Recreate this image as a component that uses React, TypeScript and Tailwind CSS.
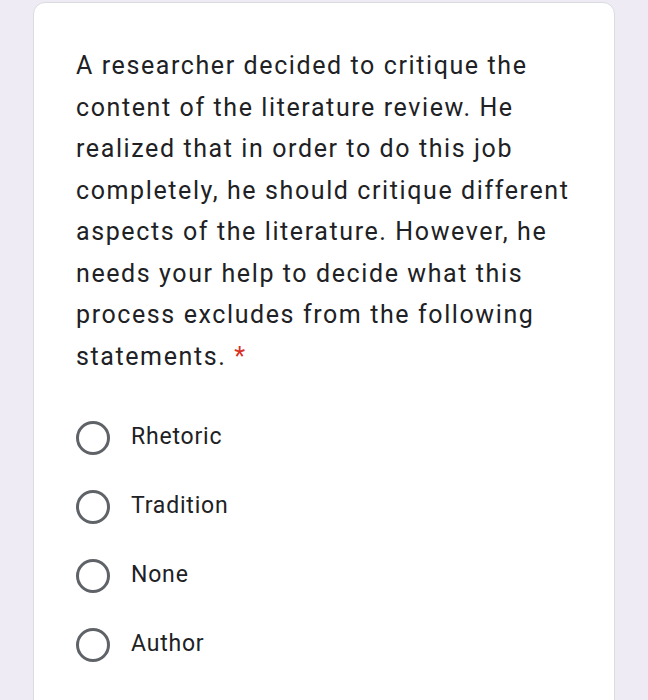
const lines = [
  'A researcher decided to critique the',
  'content of the literature review. He',
  'realized that in order to do this job',
  'completely, he should critique different',
  'aspects of the literature. However, he',
  'needs your help to decide what this',
  'process excludes from the following',
];

const options = ['Rhetoric', 'Tradition', 'None', 'Author'];

export default function App() {
  return (
    <div className="h-[700px] w-[648px] overflow-hidden bg-[#eeebf5] pl-[33px] pr-[33px] pt-[2px]">
      <div
        className="h-[720px] rounded-[12px] border border-[#dadce0] bg-white pl-[42px] pr-[20px] pt-[42px]"
        style={{ fontFamily: 'Roboto, "Noto Sans", Arial, sans-serif' }}
      >
        <div className="text-[25px] leading-[41.5px] tracking-[1.6px] text-[#202124]">
          {lines.map((l) => (
            <div key={l} className="whitespace-nowrap">
              {l}
            </div>
          ))}
          <div>
            statements. <span className="text-[#d93025]">*</span>
          </div>
        </div>
        <div className="mt-[26px] flex flex-col">
          {options.map((opt) => (
            <div key={opt} className="flex h-[69px] items-center gap-[21px]">
              <div className="h-[34px] w-[34px] rounded-full border-[3px] border-[#5f6368]" />
              <span className="text-[23px] tracking-[0.8px] text-[#202124]">{opt}</span>
            </div>
          ))}
        </div>
      </div>
    </div>
  );
}
